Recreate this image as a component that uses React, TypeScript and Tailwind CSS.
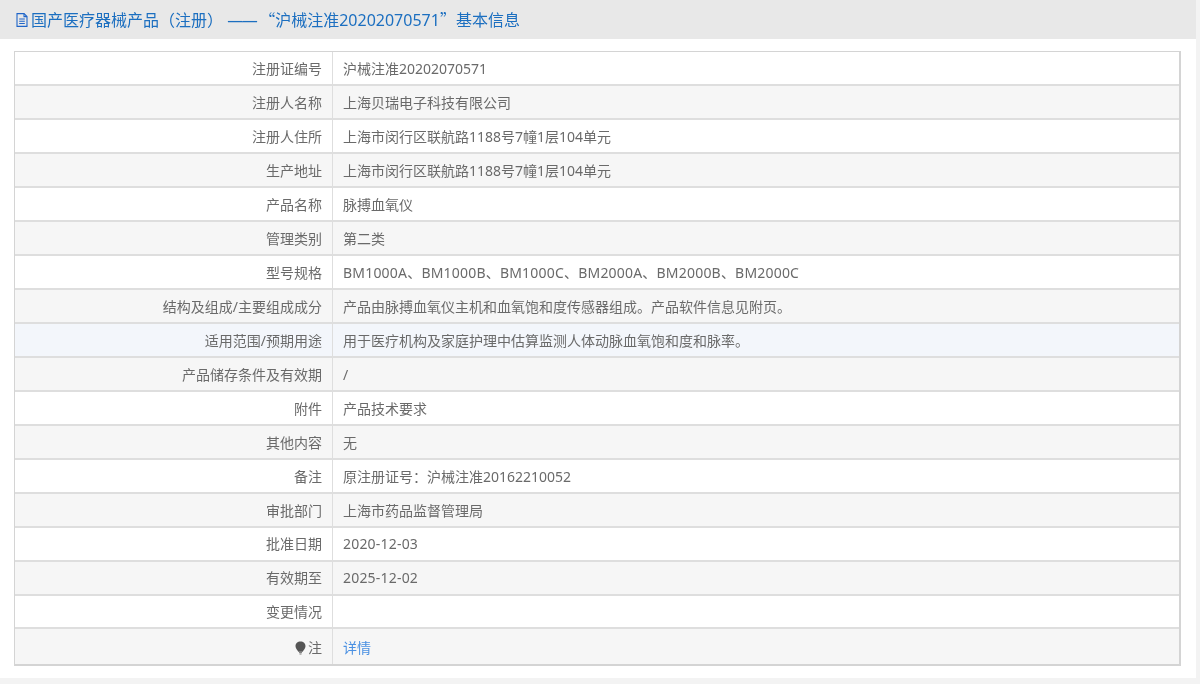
const rows: [string, string][] = [
  ["注册证编号", "沪械注准20202070571"],
  ["注册人名称", "上海贝瑞电子科技有限公司"],
  ["注册人住所", "上海市闵行区联航路1188号7幢1层104单元"],
  ["生产地址", "上海市闵行区联航路1188号7幢1层104单元"],
  ["产品名称", "脉搏血氧仪"],
  ["管理类别", "第二类"],
  ["型号规格", "BM1000A、BM1000B、BM1000C、BM2000A、BM2000B、BM2000C"],
  ["结构及组成/主要组成成分", "产品由脉搏血氧仪主机和血氧饱和度传感器组成。产品软件信息见附页。"],
  ["适用范围/预期用途", "用于医疗机构及家庭护理中估算监测人体动脉血氧饱和度和脉率。"],
  ["产品储存条件及有效期", "/"],
  ["附件", "产品技术要求"],
  ["其他内容", "无"],
  ["备注", "原注册证号：沪械注准20162210052"],
  ["审批部门", "上海市药品监督管理局"],
  ["批准日期", "2020-12-03"],
  ["有效期至", "2025-12-02"],
  ["变更情况", ""],
];

function rowBg(i: number) {
  if (i === 8) return "bg-[#f3f6fb]";
  return i % 2 === 1 ? "bg-[#f6f6f6]" : "bg-white";
}

function DocIcon() {
  return (
    <svg width="12" height="14" viewBox="0 0 12 14" fill="none" stroke="#2065c8" strokeWidth="1.1" className="mr-[3px] shrink-0">
      <path d="M1 .6h7l3 3v9.800H1z" />
      <path d="M8 .6v3h3M3.200 6h5.600M3.200 8.200h5.600M3.200 10.500h5.600" />
    </svg>
  );
}

function BulbIcon() {
  return (
    <svg width="11" height="14" viewBox="0 0 11 14" className="mr-[2px] shrink-0">
      <path d="M5.500 .5C2.600 .5 .5 2.600 .5 5.200c0 2.400 2 3.600 2.800 5.600h4.400c.8-2 2.800-3.200 2.800-5.600C10.500 2.600 8.400 .5 5.500 .5z" fill="#555" />
      <path d="M4 11.600h3M4.500 13h2" stroke="#777" strokeWidth="1" />
    </svg>
  );
}

export default function App() {
  return (
    <div className="h-[684px] w-[1200px] overflow-hidden bg-[#f3f3f3] font-['Noto_Sans','Noto_Sans_CJK_SC',sans-serif] text-sm text-[#6a6a6a] blur-[0.3px]">
      <div className="h-[678px] w-[1196px] bg-white">
        <div className="flex h-[39px] items-center bg-[#e8e8e8] pl-[16px] text-base text-[#1c6fc0]">
          <DocIcon />
          <span>
            国产医疗器械产品（注册） <span className="mr-[3px] tracking-[-1.5px]">——</span><span className="font-['Noto_Sans_CJK_SC',sans-serif]">“</span>沪械注准20202070571<span className="font-['Noto_Sans_CJK_SC',sans-serif]">”</span>基本信息
          </span>
        </div>
        <div className="ml-[14px] mt-3 w-[1167px] border-2 border-[#d4d4d4] [border-left-width:1px] [border-top-width:1px]">
          {rows.map(([k, v], i) => (
            <div key={k} className={`flex border-b-2 border-[#dedede] ${i === 16 ? "h-[33px]" : "h-[34px]"} ${rowBg(i)}`}>
              <div className={`flex w-[317px] items-center justify-end pr-[10px] ${i < 14 ? "pt-[2px]" : ""}`}>{k}</div>
              <div className={`flex flex-1 items-center border-l border-[#dedede] pl-[10px] ${i < 14 ? "pt-[2px]" : ""} ${i === 6 || i === 14 || i === 15 ? "tracking-[0.2px]" : ""}`}>{v}</div>
            </div>
          ))}
          <div className="flex h-[35px] bg-[#f6f6f6]">
            <div className="flex w-[317px] items-center justify-end pr-[10px] pt-[2px]">
              <BulbIcon />
              <span>注</span>
            </div>
            <div className="flex flex-1 items-center border-l border-[#dedede] pl-[10px] pt-[2px] text-[#4a90e2]">详情</div>
          </div>
        </div>
      </div>
    </div>
  );
}
